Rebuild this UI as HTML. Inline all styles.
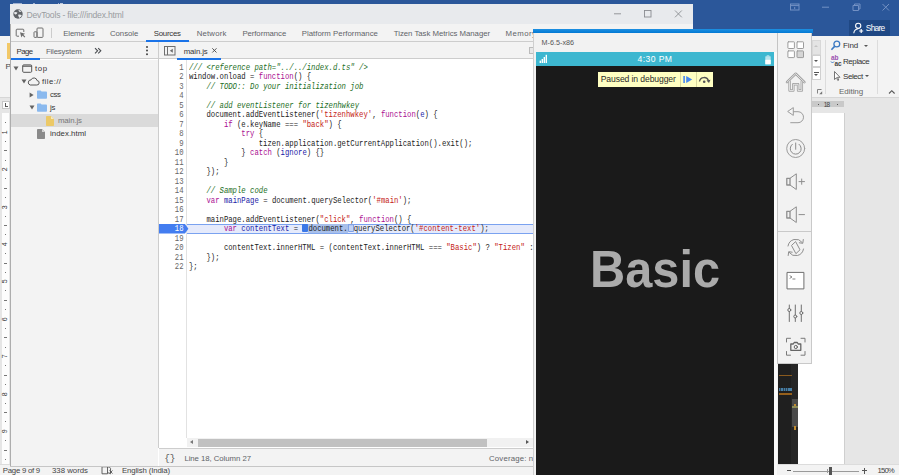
<!DOCTYPE html>
<html><head><meta charset="utf-8">
<style>
*{box-sizing:border-box;margin:0;padding:0}
html,body{width:899px;height:475px;overflow:hidden;background:#e6e6e6;font-family:"Liberation Sans",sans-serif;}
.a{position:absolute}
.t{position:absolute;white-space:nowrap;line-height:1.16}
.L{position:absolute;left:0;top:0;width:899px;height:475px;overflow:hidden}
.ln,.cl{position:absolute;font-family:"Liberation Mono",monospace;font-size:7.273px;line-height:9.49px;height:9.49px;white-space:pre;color:#222;transform:scaleY(1.14);transform-origin:0 6.69px}
.ln.cur{color:#fff}
.ln{left:159px;width:24.5px;text-align:right;color:#666}
.cl{left:189px}
.c{color:#236e25;font-style:italic}
.k{color:#aa0d91}
.s{color:#c41a16}
.d{color:#1a1aa6}
.sel{background:#a9c0ea}
.mk1,.mk2{display:inline-block;width:6px;height:7px;vertical-align:-1px;border-radius:1px}
.mk1{background:#3b78e7}
.mk2{background:#c3d3f3;border:0.5px solid #7fa2e6}
.tri{position:absolute;width:0;height:0}
.tri.d{border-left:2.9px solid transparent;border-right:2.9px solid transparent;border-top:4px solid #666}
.tri.r{border-top:2.9px solid transparent;border-bottom:2.9px solid transparent;border-left:4px solid #666}
</style></head><body>
<!-- ================= WORD ================= -->
<div class="L" id="word">
  <div class="a" style="left:0;top:0;width:899px;height:35.5px;background:#2b579a"></div>
  <div class="a" style="left:0;top:35.5px;width:899px;height:61.5px;background:#f3f3f3"></div>
  <div class="a" style="left:0;top:97px;width:899px;height:1px;background:#d6d6d6"></div>
  <div class="a" style="left:0;top:98px;width:899px;height:366px;background:#e6e6e6"></div>
  <div class="a" style="left:12.500px;top:2.500px;width:9px;height:3px;border:1px solid #b9c6df;border-bottom:none;opacity:.8"></div>
  <div class="a" style="left:33px;top:2.800px;width:2px;height:1.500px;background:#9fb1d4"></div>
  <div class="a" style="left:57.500px;top:2.500px;width:1.500px;height:2px;background:#9fb1d4"></div><div class="a" style="left:60px;top:2.500px;width:3px;height:2px;background:#b9c6df"></div>
  <!-- left bits -->
  <div class="a" style="left:6.5px;top:43px;width:3.5px;height:16px;background:#f2c867"></div>
  <div class="t" style="left:5.5px;top:62px;font-size:8px;color:#444">P</div>
  <div class="a" style="left:2px;top:101px;width:8px;height:8px;background:#fdfdfd;border:1px solid #c6c6c6"></div>
  <div class="a" style="left:4.5px;top:103px;width:1.2px;height:4px;background:#555"></div>
  <div class="a" style="left:4.5px;top:106px;width:3.5px;height:1.2px;background:#555"></div>
  <div class="a" style="left:1.800px;top:113px;width:7.200px;height:351px;background:#fdfdfd"></div>
  <div class="a" id="vruler" style="left:0;top:113px;width:10px;height:351px"><div class="t" style="left:2.2px;top:15.8px;width:6.5px;height:6.5px;font-size:7px;line-height:6.5px;color:#333;text-align:center;transform:rotate(-90deg)">1</div><div class="t" style="left:2.2px;top:53.2px;width:6.5px;height:6.5px;font-size:7px;line-height:6.5px;color:#333;text-align:center;transform:rotate(-90deg)">2</div><div class="t" style="left:2.2px;top:90.6px;width:6.5px;height:6.5px;font-size:7px;line-height:6.5px;color:#333;text-align:center;transform:rotate(-90deg)">3</div><div class="t" style="left:2.2px;top:128.0px;width:6.5px;height:6.5px;font-size:7px;line-height:6.5px;color:#333;text-align:center;transform:rotate(-90deg)">4</div><div class="t" style="left:2.2px;top:165.4px;width:6.5px;height:6.5px;font-size:7px;line-height:6.5px;color:#333;text-align:center;transform:rotate(-90deg)">5</div><div class="t" style="left:2.2px;top:202.8px;width:6.5px;height:6.5px;font-size:7px;line-height:6.5px;color:#333;text-align:center;transform:rotate(-90deg)">6</div><div class="t" style="left:2.2px;top:240.2px;width:6.5px;height:6.5px;font-size:7px;line-height:6.5px;color:#333;text-align:center;transform:rotate(-90deg)">7</div><div class="t" style="left:2.2px;top:277.6px;width:6.5px;height:6.5px;font-size:7px;line-height:6.5px;color:#333;text-align:center;transform:rotate(-90deg)">8</div><div class="t" style="left:2.2px;top:315.0px;width:6.5px;height:6.5px;font-size:7px;line-height:6.5px;color:#333;text-align:center;transform:rotate(-90deg)">9</div><div class="a" style="left:4.8px;top:9.1px;width:1px;height:1px;background:#777"></div><div class="a" style="left:4.8px;top:27.8px;width:1px;height:1px;background:#777"></div><div class="a" style="left:3.6px;top:37.3px;width:3.4px;height:.9px;background:#777"></div><div class="a" style="left:4.8px;top:46.6px;width:1px;height:1px;background:#777"></div><div class="a" style="left:4.8px;top:65.2px;width:1px;height:1px;background:#777"></div><div class="a" style="left:3.6px;top:74.7px;width:3.4px;height:.9px;background:#777"></div><div class="a" style="left:4.8px;top:83.9px;width:1px;height:1px;background:#777"></div><div class="a" style="left:4.8px;top:102.6px;width:1px;height:1px;background:#777"></div><div class="a" style="left:3.6px;top:112.1px;width:3.4px;height:.9px;background:#777"></div><div class="a" style="left:4.8px;top:121.3px;width:1px;height:1px;background:#777"></div><div class="a" style="left:4.8px;top:140.0px;width:1px;height:1px;background:#777"></div><div class="a" style="left:3.6px;top:149.5px;width:3.4px;height:.9px;background:#777"></div><div class="a" style="left:4.8px;top:158.8px;width:1px;height:1px;background:#777"></div><div class="a" style="left:4.8px;top:177.4px;width:1px;height:1px;background:#777"></div><div class="a" style="left:3.6px;top:186.9px;width:3.4px;height:.9px;background:#777"></div><div class="a" style="left:4.8px;top:196.1px;width:1px;height:1px;background:#777"></div><div class="a" style="left:4.8px;top:214.9px;width:1px;height:1px;background:#777"></div><div class="a" style="left:3.6px;top:224.3px;width:3.4px;height:.9px;background:#777"></div><div class="a" style="left:4.8px;top:233.5px;width:1px;height:1px;background:#777"></div><div class="a" style="left:4.8px;top:252.2px;width:1px;height:1px;background:#777"></div><div class="a" style="left:3.6px;top:261.7px;width:3.4px;height:.9px;background:#777"></div><div class="a" style="left:4.8px;top:270.9px;width:1px;height:1px;background:#777"></div><div class="a" style="left:4.8px;top:289.6px;width:1px;height:1px;background:#777"></div><div class="a" style="left:3.6px;top:299.1px;width:3.4px;height:.9px;background:#777"></div><div class="a" style="left:4.8px;top:308.4px;width:1px;height:1px;background:#777"></div><div class="a" style="left:4.8px;top:327.0px;width:1px;height:1px;background:#777"></div><div class="a" style="left:3.6px;top:336.5px;width:3.4px;height:.9px;background:#777"></div><div class="a" style="left:4.8px;top:345.8px;width:1px;height:1px;background:#777"></div></div>
  <!-- right: page -->
  <div class="a" style="left:778px;top:112.700px;width:67px;height:352px;background:#fff;border-right:1px solid #cfcfcf"></div>
  <!-- hruler -->
  <div class="a" style="left:812px;top:100.700px;width:32px;height:6.600px;background:#c9c9c9"></div>
  <div class="a" style="left:817.500px;top:103.500px;width:1px;height:1px;background:#555"></div>
  <div class="a" style="left:836.500px;top:103.500px;width:1px;height:1px;background:#555"></div>
  <!-- dark image in doc -->
  <div class="a" style="left:778px;top:364px;width:20.200px;height:100px;background:#1f1f1f"></div>
  <div class="a" style="left:791.400px;top:364px;width:6.800px;height:100px;background:#262626"></div>
  <div class="a" style="left:791.800px;top:398.600px;width:6.200px;height:28px;background:#4a4a4a"></div><div class="a" style="left:791.800px;top:405.600px;width:6.200px;height:2px;background:#8d8c58"></div>
  <div class="a" style="left:778.500px;top:375px;width:13px;height:1px;background:#8a5a1e"></div>
  <div class="a" style="left:778.500px;top:393px;width:13px;height:1.800px;background:#96601c"></div>
  <div class="a" style="left:778.500px;top:388px;width:13px;height:3px;background:repeating-linear-gradient(90deg,#4f8fbd 0,#4f8fbd 1.500px,#2f4c61 1.500px,#2f4c61 2.300px);opacity:.85"></div>
  <div class="a" style="left:794px;top:403.500px;width:1.600px;height:2.200px;background:#c08a2e"></div>
  <div class="a" style="left:793.800px;top:426.300px;width:1.800px;height:3.500px;background:#c08a2e"></div>
  <!-- title bar controls -->
  <svg class="a" style="left:786px;top:0" width="110" height="14" viewBox="0 0 110 14">
    <g fill="none" stroke="#7391c4" stroke-width="1"><rect x="4.500" y="4" width="8.500" height="6"/><path d="M4.500 5.600h8.500M8.700 7v2" /><path d="M36 7.200h7M67 5.500h5.500v5h-5.500zM68.500 5.500v-1.500h5.500v5h-1.500M96.500 4l6.500 6.500M103 4l-6.500 6.500"/></g></svg>
  <!-- share -->
  <div class="a" style="left:849.200px;top:20px;width:41px;height:15.500px;background:#1f4884"></div>
  <svg class="a" style="left:853px;top:22px" width="12" height="12" viewBox="0 0 12 12"><g fill="none" stroke="#fff" stroke-width="1.100"><circle cx="5.200" cy="3.800" r="2.600"/><path d="M.8 11.200Q1.200 7.200 5.200 6.800"/><path d="M8.200 7v4M6.200 9h4" stroke-width="1.200"/></g></svg>
  <!-- ribbon gallery scroll -->
  <div class="a" style="left:812px;top:40px;width:8.500px;height:14.500px;background:#e4e4e4;border:1px solid #d8d8d8"></div>
  <div class="a" style="left:812px;top:54.500px;width:8.500px;height:12.500px;background:#fff;border:1px solid #d0d0d0"></div>
  <div class="a" style="left:812px;top:67px;width:8.500px;height:13px;background:#fff;border:1px solid #d0d0d0"></div>
  <div class="tri" style="left:814.200px;top:45px;border-left:2px solid transparent;border-right:2px solid transparent;border-bottom:2.500px solid #c4c4c4"></div>
  <div class="tri" style="left:814.200px;top:60px;border-left:2px solid transparent;border-right:2px solid transparent;border-top:2.500px solid #555"></div>
  <div class="a" style="left:814px;top:71.500px;width:4.500px;height:1px;background:#555"></div>
  <div class="tri" style="left:814.200px;top:74px;border-left:2px solid transparent;border-right:2px solid transparent;border-top:2.500px solid #555"></div>
  <svg class="a" style="left:817px;top:89px" width="6" height="6" viewBox="0 0 6 6"><path d="M.5 4.500V.5H4.500" fill="none" stroke="#777" stroke-width=".9"/><path d="M2.200 5.200H5.200V2.200z" fill="#777"/></svg>
  <div class="a" style="left:825px;top:40px;width:1px;height:53.500px;background:#dcdcdc"></div>
  <div class="a" style="left:877px;top:40px;width:1px;height:53.500px;background:#dcdcdc"></div>
  <!-- find/replace/select icons -->
  <svg class="a" style="left:830px;top:40px" width="13" height="44" viewBox="0 0 13 44">
    <circle cx="6.800" cy="4" r="2.900" fill="none" stroke="#3a78c2" stroke-width="1.300"/><path d="M4.600 6.400L1.400 9.800" stroke="#3a78c2" stroke-width="1.600"/>
    <text x="1" y="19.500" font-family="Liberation Sans" font-size="6.500" fill="#9b4fb0" font-weight="bold">ab</text>
    <text x="4.500" y="25.500" font-family="Liberation Sans" font-size="6.500" fill="#444" font-weight="bold">ac</text>
    <path d="M1 21.500l1.500 1.500 1.500-1.500" stroke="#3a78c2" stroke-width="1" fill="none"/>
    <path d="M4.500 31.500v8l2-1.800 1.300 2.800 1-.5-1.300-2.700h2.500z" fill="#fff" stroke="#555" stroke-width=".8"/>
  </svg>
  <div class="tri" style="left:863.900px;top:44.600px;border-left:2.300px solid transparent;border-right:2.300px solid transparent;border-top:2.600px solid #555"></div>
  <div class="tri" style="left:864.900px;top:75.200px;border-left:2.300px solid transparent;border-right:2.300px solid transparent;border-top:2.600px solid #555"></div>
  <svg class="a" style="left:888px;top:89px" width="8" height="6" viewBox="0 0 8 6"><path d="M1 4.500L3.800 1.700 6.600 4.500" fill="none" stroke="#555" stroke-width="1.100"/></svg>
  <!-- status bar -->
  <div class="a" style="left:0;top:463.700px;width:899px;height:11.300px;background:#f3f3f3;border-top:1px solid #dcdcdc"></div>
  <svg class="a" style="left:101px;top:466px" width="13" height="9" viewBox="0 0 13 9"><path d="M1 .8h5.500v7H1z" fill="none" stroke="#555" stroke-width=".9"/><path d="M6.500 .8q2.500 0 3 1.500v5.500q-.8-1-3-1" fill="none" stroke="#555" stroke-width=".9"/><path d="M8.500 4.500l3 3M11.500 4.500l-3 3" stroke="#555" stroke-width=".9"/></svg>
  <div class="a" style="left:786.500px;top:470.200px;width:4px;height:1.200px;background:#555"></div>
  <div class="a" style="left:793px;top:470.500px;width:66px;height:.8px;background:#9a9a9a"></div>
  <div class="a" style="left:826.800px;top:468.500px;width:.8px;height:4px;background:#9a9a9a"></div>
  <div class="a" style="left:829px;top:466.500px;width:3px;height:8px;background:#555"></div>
  <div class="a" style="left:861.500px;top:470.200px;width:5.500px;height:1.200px;background:#555"></div>
  <div class="a" style="left:863.600px;top:468px;width:1.200px;height:5.500px;background:#555"></div>
<div class="t" style="left:2.8px;top:466.1px;font-size:7.8px;color:#444;letter-spacing:-0.25px;">Page 9 of 9</div>
<div class="t" style="left:52.0px;top:466.1px;font-size:7.8px;color:#444;letter-spacing:0.00px;">338 words</div>
<div class="t" style="left:122.0px;top:466.1px;font-size:7.8px;color:#444;letter-spacing:-0.13px;">English (India)</div>
<div class="t" style="left:877.6px;top:466.1px;font-size:7.8px;color:#444;letter-spacing:-0.92px;">150%</div>
<div class="t" style="left:843.0px;top:41.2px;font-size:8px;color:#333;letter-spacing:-0.12px;">Find</div>
<div class="t" style="left:843.0px;top:56.7px;font-size:8px;color:#333;letter-spacing:-0.43px;">Replace</div>
<div class="t" style="left:843.0px;top:71.6px;font-size:8px;color:#333;letter-spacing:-0.41px;">Select</div>
<div class="t" style="left:839.0px;top:87.2px;font-size:8px;color:#666;letter-spacing:-0.04px;">Editing</div>
<div class="t" style="left:865.8px;top:24.3px;font-size:8.4px;color:#fff;letter-spacing:-0.74px;">Share</div>
<div class="t" style="left:823.8px;top:100.9px;font-size:6.5px;color:#444;letter-spacing:-1.03px;">18</div>
</div>
<!-- ================= DEVTOOLS ================= -->
<div class="a" id="dtw" style="left:10px;top:4px;width:683.400px;height:463px;overflow:hidden;background:#fff">
<div class="a" style="left:-10px;top:-4px;width:899px;height:475px">
  <div class="a" style="left:10px;top:4px;width:684px;height:20px;background:#e8eaed"></div>
  <svg class="a" style="left:12.800px;top:8.600px" width="10" height="10" viewBox="0 0 10 10"><circle cx="5" cy="5" r="4.700" fill="#5f6368"/><path d="M.8 3.600Q2.600 2.400 4.400 3.600Q4.200 5.200 2.800 5.400Q1.600 5.800 .8 3.600Z M5.400 .8Q7.400 1.200 8.400 2.600Q7 3.400 6 2.600Z M5 5.800Q7 5.200 8.800 6.200Q8.200 8 6.400 9Q5.400 7.600 5 5.800Z" fill="#e8eaed"/></svg>
  <svg class="a" style="left:610px;top:7px" width="80" height="14" viewBox="0 0 80 14"><g stroke="#8a8d91" stroke-width=".9" fill="none"><path d="M4 6.800h7"/><rect x="34.500" y="3.500" width="6.500" height="6.500"/><path d="M65 3.500l6.800 6.800M71.800 3.500l-6.800 6.800"/></g></svg>
  <!-- main tab bar -->
  <div class="a" style="left:10px;top:24px;width:684px;height:17.800px;background:#f3f3f3;border-bottom:1px solid #cdcdcd"></div>
  <svg class="a" style="left:15px;top:27.800px" width="12" height="12" viewBox="0 0 12 12"><g stroke="#6e6e6e" stroke-width="1" fill="none"><path d="M8.800 4V2Q8.800 1.200 8 1.200H2Q1.200 1.200 1.200 2V7.400Q1.200 8.200 2 8.200H4"/><path d="M5 4.200l1.400 5.200 1.100-1.800 2 2 .8-.8-2-2 1.800-1.100z" fill="#6e6e6e" stroke="none"/></g></svg>
  <svg class="a" style="left:33px;top:26.800px" width="12" height="12" viewBox="0 0 12 12"><g stroke="#6e6e6e" stroke-width="1" fill="none"><rect x="4" y="1" width="6" height="9.400" rx=".9"/><rect x="1" y="4.800" width="3" height="5.600" rx=".6"/></g></svg>
  <div class="a" style="left:51px;top:27.500px;width:1px;height:10.500px;background:#ccc"></div>
  <div class="a" style="left:146px;top:40px;width:43px;height:1.800px;background:#1a73e8"></div>
  <!-- sub bar -->
  <div class="a" style="left:10px;top:41.800px;width:684px;height:17.700px;background:#f3f3f3;border-bottom:1px solid #cdcdcd"></div>
  <svg class="a" style="left:93.500px;top:47px" width="8" height="8" viewBox="0 0 8 8"><path d="M1 1.200L3.600 3.800L1 6.400M4.200 1.200L6.800 3.800L4.200 6.400" fill="none" stroke="#4a4d51" stroke-width="1.100"/></svg>
  <div class="a" style="left:146.400px;top:46.200px;width:2.100px;height:2.100px;border-radius:1px;background:#444;box-shadow:0 3.600px 0 #444,0 7.200px 0 #444"></div>
  <div class="a" style="left:10px;top:57.500px;width:30px;height:2.200px;background:#1a73e8"></div>
  <div class="a" style="left:158px;top:41.800px;width:1px;height:406px;background:#cdcdcd"></div>
  <svg class="a" style="left:164px;top:46px" width="12" height="10" viewBox="0 0 12 10"><rect x=".5" y=".5" width="10.500" height="8.500" fill="none" stroke="#6e6e6e"/><path d="M3.500 .5v8.500" stroke="#6e6e6e"/><path d="M8.800 2.700v4.100l-3-2.050z" fill="#6e6e6e"/></svg>
  <svg class="a" style="left:211px;top:47.300px" width="7" height="7" viewBox="0 0 7 7"><path d="M1.300 1.300l4.200 4.200M5.500 1.300l-4.200 4.200" stroke="#444" stroke-width=".9"/></svg>
  <div class="a" style="left:177px;top:57.500px;width:43.500px;height:2.200px;background:#1a73e8"></div>
  <div class="a" style="left:528.500px;top:46.500px;width:8px;height:7.500px;border:1px solid #bbb;background:#e8e8e8"></div>
  <!-- tree -->
  <div class="a" style="left:10px;top:59.500px;width:148px;height:408px;background:#f3f3f3"></div>
  <div class="a" style="left:10px;top:114px;width:148px;height:13px;background:#dadada"></div>
  <svg class="a" style="left:12.5px;top:65.6px" width="6" height="5" viewBox="0 0 6 5"><path d="M.5 .6H5.500L3 4.600z" fill="#636363"/></svg>
  <svg class="a" style="left:21.600px;top:63.500px" width="11" height="10" viewBox="0 0 11 10"><rect x=".7" y=".9" width="9" height="7.400" rx="1" fill="none" stroke="#555" stroke-width="1"/><path d="M.7 2.200h9" stroke="#555" stroke-width="1.100"/></svg>
  <svg class="a" style="left:20.9px;top:78.7px" width="6" height="5" viewBox="0 0 6 5"><path d="M.5 .6H5.500L3 4.600z" fill="#636363"/></svg>
  <svg class="a" style="left:27px;top:76.500px" width="13" height="9" viewBox="0 0 13 9"><path d="M3.200 8h6.600a2.200 2.200 0 0 0 .3-4.400 3.200 3.200 0 0 0-6.100-.7A2.600 2.600 0 0 0 3.200 8z" fill="none" stroke="#555" stroke-width="1"/></svg>
  <svg class="a" style="left:29.2px;top:91.5px" width="5" height="6" viewBox="0 0 5 6"><path d="M.6 .5V5.500L4.600 3z" fill="#636363"/></svg>
  <svg class="a" style="left:36.900px;top:90px" width="10" height="9" viewBox="0 0 10 9"><path d="M0 1.200Q0 .4 .8 .4H3.600L4.600 1.600H9.200Q10 1.600 10 2.400V8Q10 8.800 9.200 8.800H.8Q0 8.800 0 8z" fill="#8ab9ee"/></svg>
  <svg class="a" style="left:28.6px;top:105.3px" width="6" height="5" viewBox="0 0 6 5"><path d="M.5 .6H5.500L3 4.600z" fill="#636363"/></svg>
  <svg class="a" style="left:36.900px;top:103px" width="10" height="9" viewBox="0 0 10 9"><path d="M0 1.200Q0 .4 .8 .4H3.600L4.600 1.600H9.200Q10 1.600 10 2.400V8Q10 8.800 9.200 8.800H.8Q0 8.800 0 8z" fill="#8ab9ee"/></svg>
  <svg class="a" style="left:45.500px;top:115.500px" width="8" height="10" viewBox="0 0 8 10"><path d="M0 .8Q0 0 .8 0H5L8 3V9.200Q8 10 7.200 10H.8Q0 10 0 9.200z" fill="#ecc967"/><path d="M5 0V3H8z" fill="#f8e8b8"/></svg>
  <svg class="a" style="left:37px;top:128.500px" width="8" height="10" viewBox="0 0 8 10"><path d="M0 .8Q0 0 .8 0H5L8 3V9.200Q8 10 7.200 10H.8Q0 10 0 9.200z" fill="#8a8a8a"/><path d="M5 0V3H8z" fill="#d4d4d4"/></svg>
  <!-- gutter + code -->
  <div class="a" style="left:185.800px;top:59.500px;width:1px;height:378px;background:#e2e2e2"></div>
  <div class="a" style="left:187px;top:224.300px;width:507px;height:9.600px;background:#e5eafb;border-top:1px solid #7aa2f0;border-bottom:1px solid #7aa2f0"></div>
  <svg class="a" style="left:159px;top:224.300px" width="30" height="9.600" viewBox="0 0 30 9.600"><path d="M0 0H26L29.400 4.800L26 9.600H0z" fill="#437df0"/></svg>
<div class="ln" style="top:64.00px">1</div><div class="cl" style="top:64.00px"><span class="c">/// &lt;reference path="../../index.d.ts" /&gt;</span></div>
<div class="ln" style="top:73.49px">2</div><div class="cl" style="top:73.49px">window.onload = <span class="k">function</span>() {</div>
<div class="ln" style="top:82.98px">3</div><div class="cl" style="top:82.98px">    <span class="c">// TODO:: Do your initialization job</span></div>
<div class="ln" style="top:92.47px">4</div><div class="cl" style="top:92.47px"></div>
<div class="ln" style="top:101.96px">5</div><div class="cl" style="top:101.96px">    <span class="c">// add eventListener for tizenhwkey</span></div>
<div class="ln" style="top:111.45px">6</div><div class="cl" style="top:111.45px">    document.addEventListener(<span class="s">'tizenhwkey'</span>, <span class="k">function</span>(<span class="d">e</span>) {</div>
<div class="ln" style="top:120.94px">7</div><div class="cl" style="top:120.94px">        <span class="k">if</span> (e.keyName === <span class="s">"back"</span>) {</div>
<div class="ln" style="top:130.43px">8</div><div class="cl" style="top:130.43px">            <span class="k">try</span> {</div>
<div class="ln" style="top:139.92px">9</div><div class="cl" style="top:139.92px">                tizen.application.getCurrentApplication().exit();</div>
<div class="ln" style="top:149.41px">10</div><div class="cl" style="top:149.41px">            } <span class="k">catch</span> (<span class="d">ignore</span>) {}</div>
<div class="ln" style="top:158.90px">11</div><div class="cl" style="top:158.90px">        }</div>
<div class="ln" style="top:168.39px">12</div><div class="cl" style="top:168.39px">    });</div>
<div class="ln" style="top:177.88px">13</div><div class="cl" style="top:177.88px"></div>
<div class="ln" style="top:187.37px">14</div><div class="cl" style="top:187.37px">    <span class="c">// Sample code</span></div>
<div class="ln" style="top:196.86px">15</div><div class="cl" style="top:196.86px">    <span class="k">var</span> <span class="d">mainPage</span> = document.querySelector(<span class="s">'#main'</span>);</div>
<div class="ln" style="top:206.35px">16</div><div class="cl" style="top:206.35px"></div>
<div class="ln" style="top:215.84px">17</div><div class="cl" style="top:215.84px">    mainPage.addEventListener(<span class="s">"click"</span>, <span class="k">function</span>() {</div>
<div class="ln cur" style="top:225.33px">18</div><div class="cl" style="top:225.33px">        <span class="k">var</span> <span class="d">contentText</span> = <span class="mk1"></span><span class="sel">document.</span><span class="mk2"></span>querySelector(<span class="s">'#content-text'</span>);</div>
<div class="ln" style="top:234.82px">19</div><div class="cl" style="top:234.82px"></div>
<div class="ln" style="top:244.31px">20</div><div class="cl" style="top:244.31px">        contentText.innerHTML = (contentText.innerHTML === <span class="s">"Basic"</span>) ? <span class="s">"Tizen"</span> : <span class="s">"Basic"</span>;</div>
<div class="ln" style="top:253.80px">21</div><div class="cl" style="top:253.80px">    });</div>
<div class="ln" style="top:263.29px">22</div><div class="cl" style="top:263.29px">};</div>
  <!-- bottom scrollbar -->
  <div class="a" style="left:187px;top:437.800px;width:507px;height:9.700px;background:#f1f1f1"></div>
  <div class="a" style="left:197.600px;top:439px;width:289.400px;height:7.500px;background:#c1c1c1"></div>
  <div class="tri" style="left:190px;top:440.200px;border-top:2.500px solid transparent;border-bottom:2.500px solid transparent;border-right:3px solid #777"></div>
  <div class="tri" style="left:526px;top:440.200px;border-top:2.500px solid transparent;border-bottom:2.500px solid transparent;border-left:3px solid #555"></div>
  <!-- status -->
  <div class="a" style="left:158.500px;top:447.800px;width:536px;height:18.600px;background:#f3f3f3;border-top:1px solid #cdcdcd"></div>
  <div class="t" style="left:164.300px;top:452.600px;font-size:9.500px;color:#555;letter-spacing:-.2px;font-family:'Liberation Mono',monospace">{}</div>
<div class="t" style="left:26.5px;top:10.5px;font-size:8.6px;color:#999ca0;letter-spacing:-0.20px;">DevTools - file:///index.html</div>
<div class="t" style="left:63.3px;top:28.7px;font-size:7.8px;color:#5f6368;letter-spacing:-0.15px;">Elements</div>
<div class="t" style="left:110.0px;top:28.7px;font-size:7.8px;color:#5f6368;letter-spacing:-0.05px;">Console</div>
<div class="t" style="left:153.8px;top:28.7px;font-size:7.8px;color:#333;letter-spacing:-0.23px;">Sources</div>
<div class="t" style="left:196.7px;top:28.7px;font-size:7.8px;color:#5f6368;letter-spacing:0.18px;">Network</div>
<div class="t" style="left:242.4px;top:28.7px;font-size:7.8px;color:#5f6368;letter-spacing:-0.08px;">Performance</div>
<div class="t" style="left:301.7px;top:28.7px;font-size:7.8px;color:#5f6368;letter-spacing:0.02px;">Platform Performance</div>
<div class="t" style="left:393.8px;top:28.7px;font-size:7.8px;color:#5f6368;letter-spacing:-0.03px;">Tizen Task Metrics Manager</div>
<div class="t" style="left:505.5px;top:28.7px;font-size:7.8px;color:#5f6368;letter-spacing:0.47px;">Memory</div>
<div class="t" style="left:16.5px;top:46.7px;font-size:7.8px;color:#333;letter-spacing:-0.54px;">Page</div>
<div class="t" style="left:45.9px;top:46.7px;font-size:7.8px;color:#5f6368;letter-spacing:-0.16px;">Filesystem</div>
<div class="t" style="left:183.7px;top:46.7px;font-size:7.8px;color:#333;letter-spacing:-0.12px;">main.js</div>
<div class="t" style="left:35.0px;top:63.7px;font-size:7.8px;color:#333;letter-spacing:0.58px;">top</div>
<div class="t" style="left:42.0px;top:76.7px;font-size:7.8px;color:#333;letter-spacing:0.42px;">file://</div>
<div class="t" style="left:50.0px;top:89.7px;font-size:7.8px;color:#333;letter-spacing:-0.35px;">css</div>
<div class="t" style="left:50.0px;top:102.7px;font-size:7.8px;color:#333;letter-spacing:-0.14px;">js</div>
<div class="t" style="left:58.0px;top:115.7px;font-size:7.8px;color:#777;letter-spacing:-0.12px;">main.js</div>
<div class="t" style="left:50.0px;top:128.7px;font-size:7.8px;color:#333;letter-spacing:0.05px;">index.html</div>
<div class="t" style="left:184.4px;top:453.7px;font-size:7.8px;color:#5f6368;letter-spacing:-0.06px;">Line 18, Column 27</div>
<div class="t" style="left:489.0px;top:453.7px;font-size:7.8px;color:#5f6368;letter-spacing:0.17px;">Coverage: n/a</div>
  <div class="a" style="left:10px;top:24px;width:.8px;height:443px;background:#adadad"></div>
  <div class="a" style="left:10px;top:466px;width:684px;height:1px;background:#c6c6c6"></div>
</div>
</div>
<!-- ================= EMULATOR ================= -->
<div class="L" id="emu">
  <div class="a" style="left:532.500px;top:29.200px;width:280px;height:3.700px;background:linear-gradient(#1d90e2,#0379d3)"></div>
  <div class="a" style="left:532.500px;top:32.900px;width:245.500px;height:443px;background:#f2f2f2;border-left:1px solid #cfcfcf"></div>
  <div class="a" style="left:536.200px;top:52px;width:238px;height:14px;background:#3db7d0"></div>
  <div class="a" style="left:536.200px;top:65.700px;width:238px;height:410px;background:#1a1a1a"></div>
  <div class="a" style="left:774.200px;top:52px;width:3.200px;height:424px;background:#fafafa"></div>
  <div class="a" style="left:777.200px;top:32.900px;width:1px;height:331px;background:#c4c4c4"></div>
  <!-- signal -->
  <svg class="a" style="left:539px;top:54px" width="9" height="10" viewBox="0 0 9 10"><g fill="#fff"><rect x=".6" y="6.600" width="1.400" height="2.400"/><rect x="2.600" y="5" width="1.400" height="4"/><rect x="4.600" y="3" width="1.400" height="6"/><rect x="6.600" y=".8" width="1.400" height="8.200"/></g></svg>
  <!-- battery -->
  <svg class="a" style="left:765px;top:54.500px" width="6" height="10" viewBox="0 0 6 10"><rect x="1.700" y=".3" width="2.600" height="1.200" fill="#b9e4ee"/><rect x=".3" y="1.300" width="5.400" height="8" rx=".5" fill="#b9e4ee"/><rect x=".3" y="4.800" width="5.400" height="4.500" fill="#fff"/></svg>
  <!-- paused box -->
  <div class="a" style="left:597.600px;top:72.200px;width:115.200px;height:14.500px;background:#ffffc2"></div>
  <div class="a" style="left:679.500px;top:72.200px;width:.8px;height:14.500px;background:#d9d9a0"></div>
  <div class="a" style="left:696px;top:72.200px;width:.8px;height:14.500px;background:#d9d9a0"></div>
  <svg class="a" style="left:682px;top:75px" width="30" height="9" viewBox="0 0 30 9"><rect x="1.300" y="1" width="1.600" height="7" fill="#4688f1"/><path d="M4.200 1L10.200 4.500L4.200 8z" fill="#4688f1"/><path d="M17.500 6.500A4.600 4.600 0 0 1 26.500 6" fill="none" stroke="#555" stroke-width="1.400"/><path d="M24.500 5.500L28.500 4.800L27 8z" fill="#555"/><circle cx="22.200" cy="6.800" r="1.300" fill="#555"/></svg>
  <!-- Basic -->
  <div class="t" id="basic" style="left:590px;top:239.400px;font-size:52px;font-weight:bold;color:#ababab;transform-origin:0 0;transform:scaleX(.937);line-height:1.16">Basic</div>
<div class="t" style="left:541.5px;top:38.5px;font-size:7.2px;color:#555;letter-spacing:0.02px;">M-6.5-x86</div>
<div class="t" style="left:637.5px;top:54.8px;font-size:8.6px;color:#fff;letter-spacing:0.41px;">4:30 PM</div>
<div class="t" style="left:600.7px;top:75.2px;font-size:8.6px;color:#2a2a2a;letter-spacing:-0.10px;">Paused in debugger</div>
  <!-- side panel -->
  <div class="a" style="left:778px;top:32.900px;width:34.200px;height:331px;background:#f2f2f2;border-right:1px solid #c9c9c9;border-bottom:1px solid #c9c9c9"></div>
  <div class="a" style="left:778px;top:230.500px;width:34px;height:1px;background:#c9c9c9"></div>
  <svg class="a" style="left:778px;top:33px" width="34" height="331" viewBox="778 33 34 331">
   <g fill="none" stroke="#9c9c9c" stroke-width="1" stroke-linejoin="round" stroke-linecap="round">
    <!-- grid -->
    <rect x="787.900" y="41.800" width="6.500" height="6.700" rx=".6" fill="#fff"/><rect x="797" y="41.800" width="6.500" height="6.700" rx=".6" fill="#fff"/><rect x="787.900" y="50.900" width="6.500" height="6.700" rx=".6" fill="#fff"/><rect x="797" y="50.900" width="6.500" height="6.700" rx=".6" fill="#d6d6d6"/>
    <!-- home (double line) -->
    <g stroke="#a0a0a0" stroke-width="2.500"><path d="M787 82.200L795.700 73.700L804.400 82.200"/><path d="M789.600 81.500V90.600H793.300V84.300H798.100V90.600H801.800V81.500"/></g>
    <g stroke="#f6f6f6" stroke-width=".8"><path d="M787 82.200L795.700 73.700L804.400 82.200"/><path d="M789.600 81.500V90.600H793.300V84.300H798.100V90.600H801.800V81.500"/></g>
    <!-- back -->
    <path d="M793.300 111.700H798A5.500 5.500 0 0 1 798 122.700H790.700"/><path d="M793.300 108V115.400L788 111.700z" fill="#f6f6f6"/>
    <!-- power -->
    <circle cx="795.700" cy="148.500" r="9"/><path d="M795.700 143V149.300" stroke="#8c8c8c"/><path d="M792.300 144.300A5.500 5.500 0 1 0 799.100 144.300" stroke="#8c8c8c"/>
    <!-- vol+ -->
    <g stroke="#8e8e8e"><path d="M786.800 178.300H790V185H786.800z" stroke-width="1.300"/><path d="M790 178.300L796.300 173.800V189.500L790 185"/><path d="M799 181.600H804.500M801.700 179V184.300"/>
    <!-- vol- -->
    <path d="M786.800 211.300H790V218H786.800z" stroke-width="1.300"/><path d="M790 211.300L796.300 206.800V222.500L790 218"/><path d="M799 214.600H804.500"/></g>
    <!-- rotate -->
    <g stroke="#8e8e8e"><path d="M788 246A8 8 0 0 1 802.300 242.500"/><path d="M803.300 239.500L802.800 243.300L799.300 242.800"/><path d="M803.500 249A8 8 0 0 1 789.200 252.500"/><path d="M788.200 255.500L788.700 251.700L792.200 252.200"/><path d="M791.800 245.200L795.600 241.600L800 249.800L796.200 253.400z"/></g>
    <!-- terminal -->
    <rect x="787.400" y="272.400" width="16.500" height="16.500" stroke="#6e6e6e" fill="#fff"/><path d="M790 275.800L792 277L790 278.200M792.800 279H795" stroke="#666" stroke-width=".8"/>
    <!-- sliders -->
    <g stroke="#707070"><path d="M789.300 305V308.500M789.300 311.500V321.500M795.300 305V315M795.300 318V321.500M801.300 305V311.500M801.300 314.500V321.500"/><circle cx="789.300" cy="310" r="1.500"/><circle cx="795.300" cy="316.500" r="1.500"/><circle cx="801.300" cy="313" r="1.500"/></g>
    <!-- camera -->
    <g stroke="#7a7a7a"><path d="M786.500 342V338.300H790.500M801 338.300H805V342M805 351.500V355.200H801M790.500 355.200H786.500V351.500"/><path d="M790.800 344H793.300L794.200 342.500H797.300L798.200 344H800.800V350.300H790.800z" stroke-width="1.300" stroke="#666"/><circle cx="795.800" cy="347" r="1.600" stroke="#666"/></g>
   </g>
  </svg>
</div>
</body></html>
